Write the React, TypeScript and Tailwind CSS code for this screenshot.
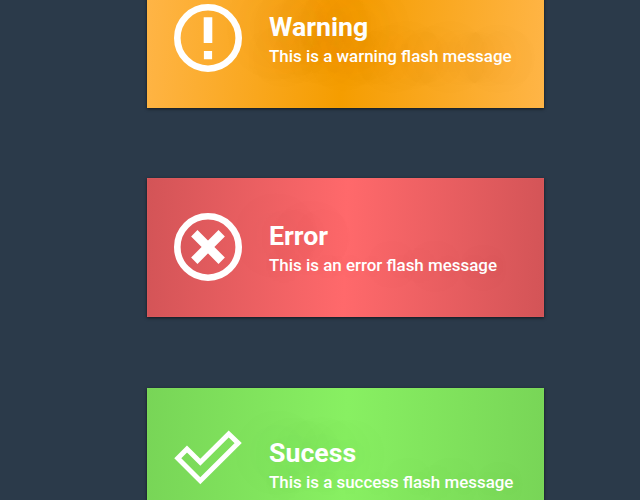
import type { ReactNode } from "react";

type FlashProps = {
  title: string;
  message: string;
  icon: ReactNode;
  surface: string;
  textStyle: string;
};

function WarningIcon() {
  return (
    <svg className="block h-[70px] w-[70px]" viewBox="0 0 70 70" fill="none">
      <circle cx="35" cy="35" r="30.7" stroke="white" strokeWidth="6.6" />
      <path d="M30.7 14.3h8.6v25.6h-8.6zM30.9 48h8.2v8.3h-8.2z" fill="white" />
    </svg>
  );
}

function ErrorIcon() {
  return (
    <svg className="block h-[70px] w-[70px]" viewBox="0 0 70 70" fill="none">
      <circle cx="35" cy="35" r="30.7" stroke="white" strokeWidth="6.6" />
      <path d="M21.3 21.3 48.7 48.7M48.7 21.3 21.3 48.7" stroke="white" strokeWidth="9" />
    </svg>
  );
}

function SuccessIcon() {
  return (
    <svg className="block h-[70px] w-[70px]" viewBox="0 0 70 70" fill="none">
      <path
        d="M4.8 36.3 14 27l13.3 13.2 28.4-28.3 9.5 9.2-37.9 37.6Z"
        stroke="white"
        strokeWidth="5"
        strokeLinejoin="miter"
      />
    </svg>
  );
}

function FlashMessage({ title, message, icon, surface, textStyle }: FlashProps) {
  return (
    <section
      className={`flex h-[139px] w-[397px] shrink-0 items-start overflow-hidden pt-[34px] pl-[26px] ${surface}`}
    >
      {icon}
      <div className={`ml-[26px] whitespace-nowrap text-white ${textStyle}`}>
        <h2 className="text-[26.7px] leading-[30px] font-bold">{title}</h2>
        <p className="mt-px text-[16.93px] leading-[26px] font-medium">{message}</p>
      </div>
    </section>
  );
}

export default function App() {
  return (
    <main className="flex h-[500px] w-[640px] flex-col overflow-hidden bg-[#2b3a4a] pl-[147px] font-['Roboto',sans-serif]">
      <FlashMessage
        title="Warning"
        message="This is a warning flash message"
        icon={<WarningIcon />}
        surface="-mt-[31px] bg-[linear-gradient(95deg,#ffb547_0%,#f59d00_50%,#ffb547_100%)] shadow-[0_1px_3px_rgba(0,0,0,0.6),inset_0_0_1px_rgba(255,190,60,0.8)]"
        textStyle="mt-[9px] [text-shadow:0_0_50px_rgba(150,85,0,0.45)]"
      />
      <FlashMessage
        title="Error"
        message="This is an error flash message"
        icon={<ErrorIcon />}
        surface="mt-[70px] bg-[linear-gradient(92deg,#d35457_0%,#ff696b_50%,#d35457_100%)] shadow-[0_1px_3px_rgba(0,0,0,0.6),inset_0_0_1px_rgba(255,120,120,0.8)]"
        textStyle="mt-[9px] [text-shadow:0_0_50px_rgba(120,30,40,0.25)]"
      />
      <FlashMessage
        title="Sucess"
        message="This is a success flash message"
        icon={<SuccessIcon />}
        surface="mt-[71px] bg-[linear-gradient(92deg,#78d557_0%,#88f062_50%,#78d557_100%)] shadow-[0_1px_3px_rgba(0,0,0,0.6),inset_0_0_1px_rgba(150,245,110,0.8)]"
        textStyle="mt-[16px] [text-shadow:0_0_50px_rgba(40,110,20,0.3)]"
      />
    </main>
  );
}
